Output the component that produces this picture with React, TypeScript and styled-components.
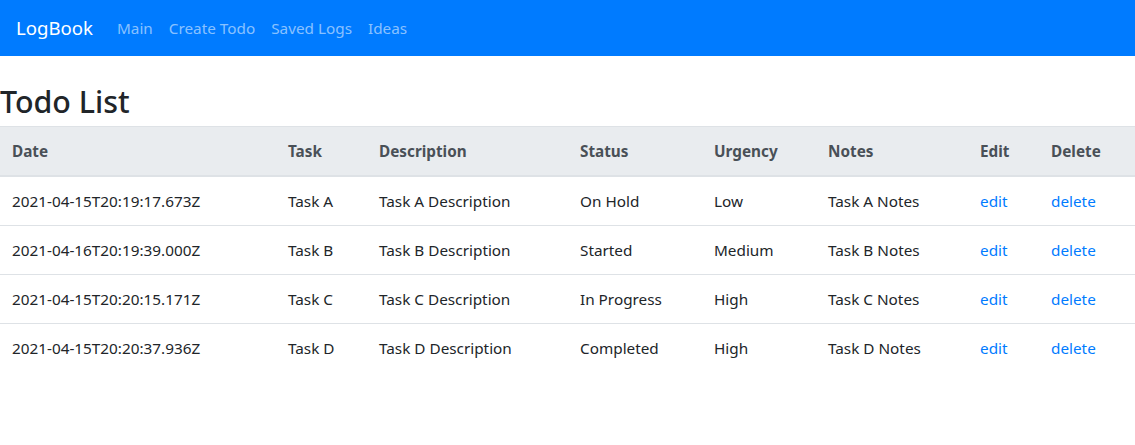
import styled, { createGlobalStyle } from 'styled-components';

const todos = [
  { date: '2021-04-15T20:19:17.673Z', task: 'Task A', description: 'Task A Description', status: 'On Hold', urgency: 'Low', notes: 'Task A Notes' },
  { date: '2021-04-16T20:19:39.000Z', task: 'Task B', description: 'Task B Description', status: 'Started', urgency: 'Medium', notes: 'Task B Notes' },
  { date: '2021-04-15T20:20:15.171Z', task: 'Task C', description: 'Task C Description', status: 'In Progress', urgency: 'High', notes: 'Task C Notes' },
  { date: '2021-04-15T20:20:37.936Z', task: 'Task D', description: 'Task D Description', status: 'Completed', urgency: 'High', notes: 'Task D Notes' },
];

const columns = [
  { label: 'Date', width: 276 },
  { label: 'Task', width: 91 },
  { label: 'Description', width: 201 },
  { label: 'Status', width: 134 },
  { label: 'Urgency', width: 114 },
  { label: 'Notes', width: 152 },
  { label: 'Edit', width: 71 },
  { label: 'Delete', width: 96 },
];

const GlobalStyle = createGlobalStyle`
  body {
    margin: 0;
    font-family: "Noto Sans", "Open Sans", sans-serif;
    font-size: 15.3px;
    line-height: 24px;
    color: #212529;
    background: #fff;
  }
`;

const App = () => {
  return (
    <>
      <GlobalStyle />
      <Navbar>
        <Brand href="#">LogBook</Brand>
        <NavLinks>
          <NavLink href="#">Main</NavLink>
          <NavLink href="#">Create Todo</NavLink>
          <NavLink href="#">Saved Logs</NavLink>
          <NavLink href="#">Ideas</NavLink>
        </NavLinks>
      </Navbar>

      <Main>
        <Title>Todo List</Title>
        <Table>
          <colgroup>
            {columns.map((c) => (
              <col key={c.label} style={{ width: c.width }} />
            ))}
          </colgroup>
          <thead>
            <tr>
              {columns.map((c) => (
                <Th key={c.label}>{c.label}</Th>
              ))}
            </tr>
          </thead>
          <tbody>
            {todos.map((t) => (
              <tr key={t.date}>
                <Td>{t.date}</Td>
                <Td>{t.task}</Td>
                <Td>{t.description}</Td>
                <Td>{t.status}</Td>
                <Td>{t.urgency}</Td>
                <Td>{t.notes}</Td>
                <Td><ActionLink href="#">edit</ActionLink></Td>
                <Td><ActionLink href="#">delete</ActionLink></Td>
              </tr>
            ))}
          </tbody>
        </Table>
      </Main>
    </>
  );
};

const Navbar = styled.nav`
  display: flex;
  align-items: center;
  height: 56px;
  padding: 0 16px;
  box-sizing: border-box;
  background-color: #007bff;
`;

const Brand = styled.a`
  font-size: 18.6px;
  color: #fff;
  text-decoration: none;
  margin-right: 16px;
  line-height: 30px;
`;

const NavLinks = styled.div`
  display: flex;
`;

const NavLink = styled.a`
  padding: 8px 8px;
  color: rgba(255, 255, 255, 0.55);
  text-decoration: none;
`;

const Main = styled.main`
  padding-top: 22px;
`;

const Title = styled.h1`
  margin: 0;
  font-size: 30.4px;
  font-weight: 500;
  line-height: 48px;
`;

const Table = styled.table`
  width: 100%;
  table-layout: fixed;
  border-collapse: collapse;
`;

const Th = styled.th`
  padding: 12px;
  text-align: left;
  font-weight: 700;
  color: #495057;
  background-color: #e9ecef;
  border-top: 1px solid #dee2e6;
  border-bottom: 2px solid #dee2e6;
  vertical-align: bottom;
`;

const Td = styled.td`
  padding: 12px;
  border-top: 1px solid #dee2e6;
  vertical-align: top;
  white-space: nowrap;
`;

const ActionLink = styled.a`
  color: #007bff;
  text-decoration: none;
`;

export default App;
